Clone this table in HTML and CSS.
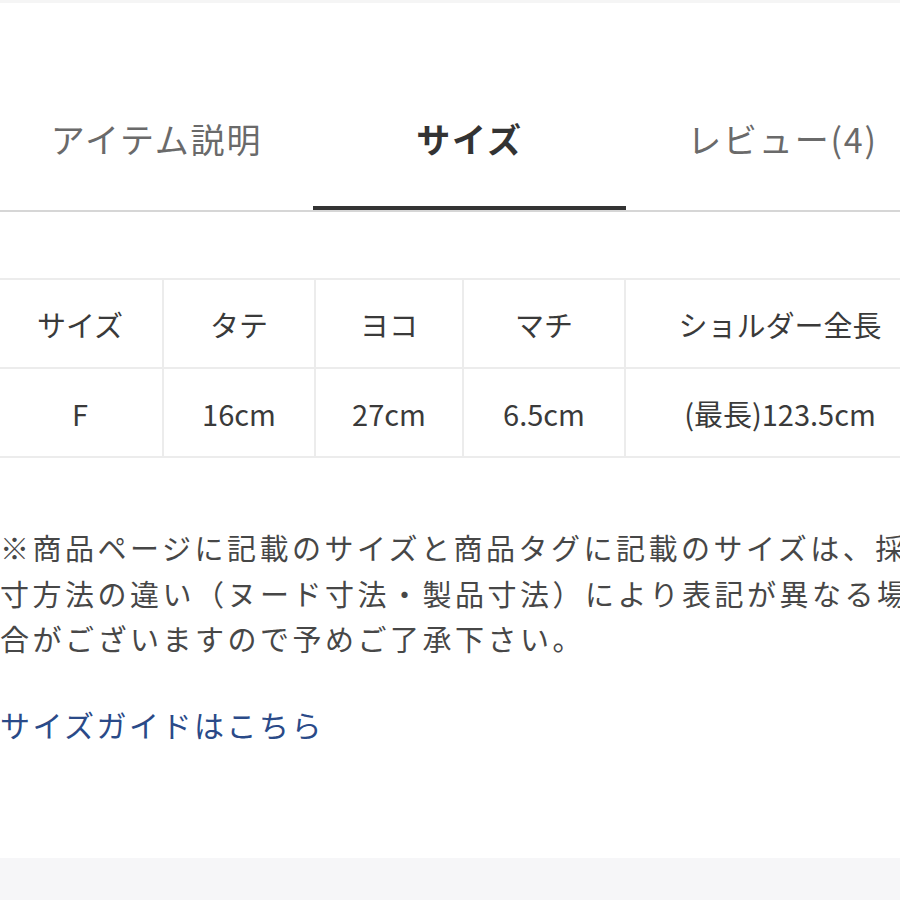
FILE: index.html
```html
<!DOCTYPE html>
<html lang="ja">
<head>
<meta charset="utf-8">
<link rel="stylesheet" href="styles.css">
</head>
<body>
<div class="topband"></div>
<main class="page">
  <nav class="tabs">
    <div class="tab">アイテム説明</div>
    <div class="tab active">サイズ</div>
    <div class="tab">レビュー(4)</div>
  </nav>
  <section class="content">
    <table class="sizes">
      <tr>
        <td class="c1">サイズ</td>
        <td class="c2">タテ</td>
        <td class="c3">ヨコ</td>
        <td class="c4">マチ</td>
        <td class="c5">ショルダー全長</td>
      </tr>
      <tr>
        <td class="c1">F</td>
        <td class="c2">16cm</td>
        <td class="c3">27cm</td>
        <td class="c4">6.5cm</td>
        <td class="c5">(最長)123.5cm</td>
      </tr>
    </table>
    <p class="note">※商品ページに記載のサイズと商品タグに記載のサイズは、採寸方法の違い（ヌード寸法・製品寸法）により表記が異なる場合がございますので予めご了承下さい。</p>
    <a class="guide" href="#">サイズガイドはこちら</a>
  </section>
</main>
<div class="bottomband"></div>
</body>
</html>
```

FILE: styles.css
```css
html, body {
  margin: 0;
  padding: 0;
  background: #fff;
  width: 900px;
  height: 900px;
  overflow: hidden;
  font-family: "Noto Sans CJK JP", "Noto Sans", sans-serif;
  color: #3a3a3a;
}
.topband {
  height: 3px;
  background: #f5f5f5;
}
.page {
  height: 855px;
  overflow: hidden;
}
.tabs {
  display: flex;
  width: 940px;
  margin-top: 97px;
  border-bottom: 2px solid #d6d6d6;
}
.tab {
  flex: 0 0 313px;
  text-align: center;
  font-size: 34px;
  letter-spacing: 1.8px;
  line-height: 78px;
  color: #6a6a6a;
  height: 78px;
  padding-bottom: 32px;
  box-sizing: content-box;
}
.tab.active {
  color: #333;
  font-weight: 700;
  box-shadow: inset 0 -4px 0 #333;
}
.content {
  padding-top: 66px;
}
.sizes {
  border-collapse: collapse;
  width: 940px;
  table-layout: fixed;
  margin-left: -4px;
  font-size: 29px;
  color: #3a3a3a;
}
.sizes td {
  border: 2px solid #ececec;
  height: 87px;
  padding: 0;
  text-align: center;
  white-space: nowrap;
}
.c1 { width: 164px; }
.c2 { width: 150px; }
.c3 { width: 146px; }
.c4 { width: 160px; }
.c5 { width: auto; }
.note {
  margin: 67px 0 0 0;
  font-size: 29px;
  letter-spacing: 3.5px;
  line-height: 45.5px;
  color: #474747;
  width: 940px;
}
.guide {
  display: block;
  margin-top: 37px;
  font-size: 30px;
  letter-spacing: 2.5px;
  line-height: 50px;
  color: #2a4a88;
  text-decoration: none;
}
.bottomband {
  height: 42px;
  background: #f6f6f8;
}
```
